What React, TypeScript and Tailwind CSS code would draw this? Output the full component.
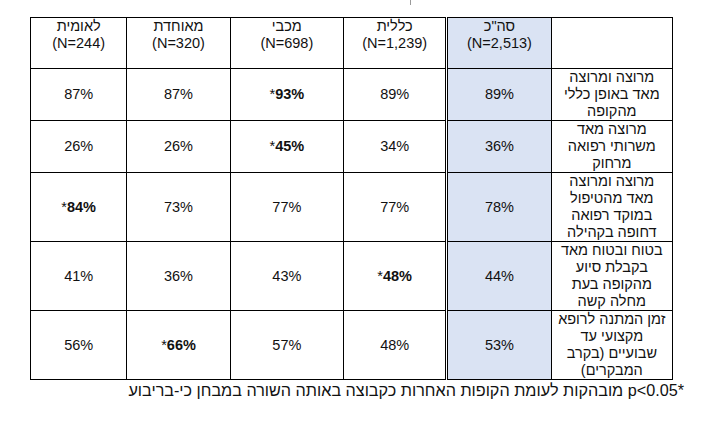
import React from "react";

type Cell = { v: string; bold?: boolean };

const headers = [
  { name: 'סה"כ', n: "(N=2,513)" },
  { name: "כללית", n: "(N=1,239)" },
  { name: "מכבי", n: "(N=698)" },
  { name: "מאוחדת", n: "(N=320)" },
  { name: "לאומית", n: "(N=244)" },
];

const rows: { label: string[]; h: string; cells: Cell[] }[] = [
  {
    label: ["מרוצה ומרוצה", "מאד באופן כללי", "מהקופה"],
    h: "h-[52px]",
    cells: [{ v: "89%" }, { v: "89%" }, { v: "93%", bold: true }, { v: "87%" }, { v: "87%" }],
  },
  {
    label: ["מרוצה מאד", "משרותי רפואה", "מרחוק"],
    h: "h-[51px]",
    cells: [{ v: "36%" }, { v: "34%" }, { v: "45%", bold: true }, { v: "26%" }, { v: "26%" }],
  },
  {
    label: ["מרוצה ומרוצה", "מאד מהטיפול", "במוקד רפואה", "דחופה בקהילה"],
    h: "h-[68px]",
    cells: [{ v: "78%" }, { v: "77%" }, { v: "77%" }, { v: "73%" }, { v: "84%", bold: true }],
  },
  {
    label: ["בטוח ובטוח מאד", "בקבלת סיוע", "מהקופה בעת", "מחלה קשה"],
    h: "h-[68px]",
    cells: [{ v: "44%" }, { v: "48%", bold: true }, { v: "43%" }, { v: "36%" }, { v: "41%" }],
  },
  {
    label: ["זמן המתנה לרופא", "מקצועי עד", "שבועיים (בקרב", "המבקרים)"],
    h: "h-[68px]",
    cells: [{ v: "53%" }, { v: "48%" }, { v: "57%" }, { v: "66%", bold: true }, { v: "56%" }],
  },
];

// column widths right to left, after the label column
const colW = ["w-[104px]", "w-[103px]", "w-[113px]", "w-[103px]", "w-[96px]"];

function Value({ cell }: { cell: Cell }) {
  if (!cell.bold) return <span>{cell.v}</span>;
  return (
    <span dir="ltr">
      *<b className="font-bold">{cell.v}</b>
    </span>
  );
}

export default function App() {
  return (
    <div
      className="w-[705px] h-[432px] bg-white text-[14.5px] leading-[17px] text-[#111]"
      style={{ fontFamily: '"Liberation Sans", Arial, sans-serif' }}
    >
      <div className="h-[17px]">
        <div className="ml-[410px] w-px h-[5px] bg-[#9a9a9a]" />
      </div>
      <div className="pl-[30px]">
        <table dir="rtl" className="border-collapse table-fixed w-[643px]">
          <colgroup>
            <col className="w-[121px]" />
            {colW.map((w, i) => (
              <col key={i} className={w} />
            ))}
          </colgroup>
          <thead>
            <tr className="h-[51px]">
              <th className="border border-black p-0 font-normal" />
              {headers.map((h, i) => (
                <th
                  key={h.n}
                  className={`border border-black p-0 font-normal align-top text-center ${
                    i === 0 ? "bg-[#dae3f3] border-l-[3px] border-l-black border-double" : ""
                  }`}
                >
                  <div>{h.name}</div>
                  <div dir="ltr">{h.n}</div>
                </th>
              ))}
            </tr>
          </thead>
          <tbody>
            {rows.map((r) => (
              <tr key={r.label[0]} className={r.h}>
                <td className="border border-black px-0.5 py-0 text-center align-top">
                  {r.label.map((l, j) => (
                    <div key={j}>{l}</div>
                  ))}
                </td>
                {r.cells.map((c, i) => (
                  <td
                    key={i}
                    className={`border border-black p-0 text-center align-middle ${
                      i === 0 ? "bg-[#dae3f3] border-l-[3px] border-l-black border-double" : ""
                    }`}
                  >
                    <Value cell={c} />
                  </td>
                ))}
              </tr>
            ))}
          </tbody>
        </table>
      </div>
      <div dir="rtl" className="pr-[21px] pt-[1px] text-[16.2px] leading-[19px] whitespace-nowrap">
        *p&lt;0.05 מובהקות לעומת הקופות האחרות כקבוצה באותה השורה במבחן כי-בריבוע
      </div>
    </div>
  );
}
